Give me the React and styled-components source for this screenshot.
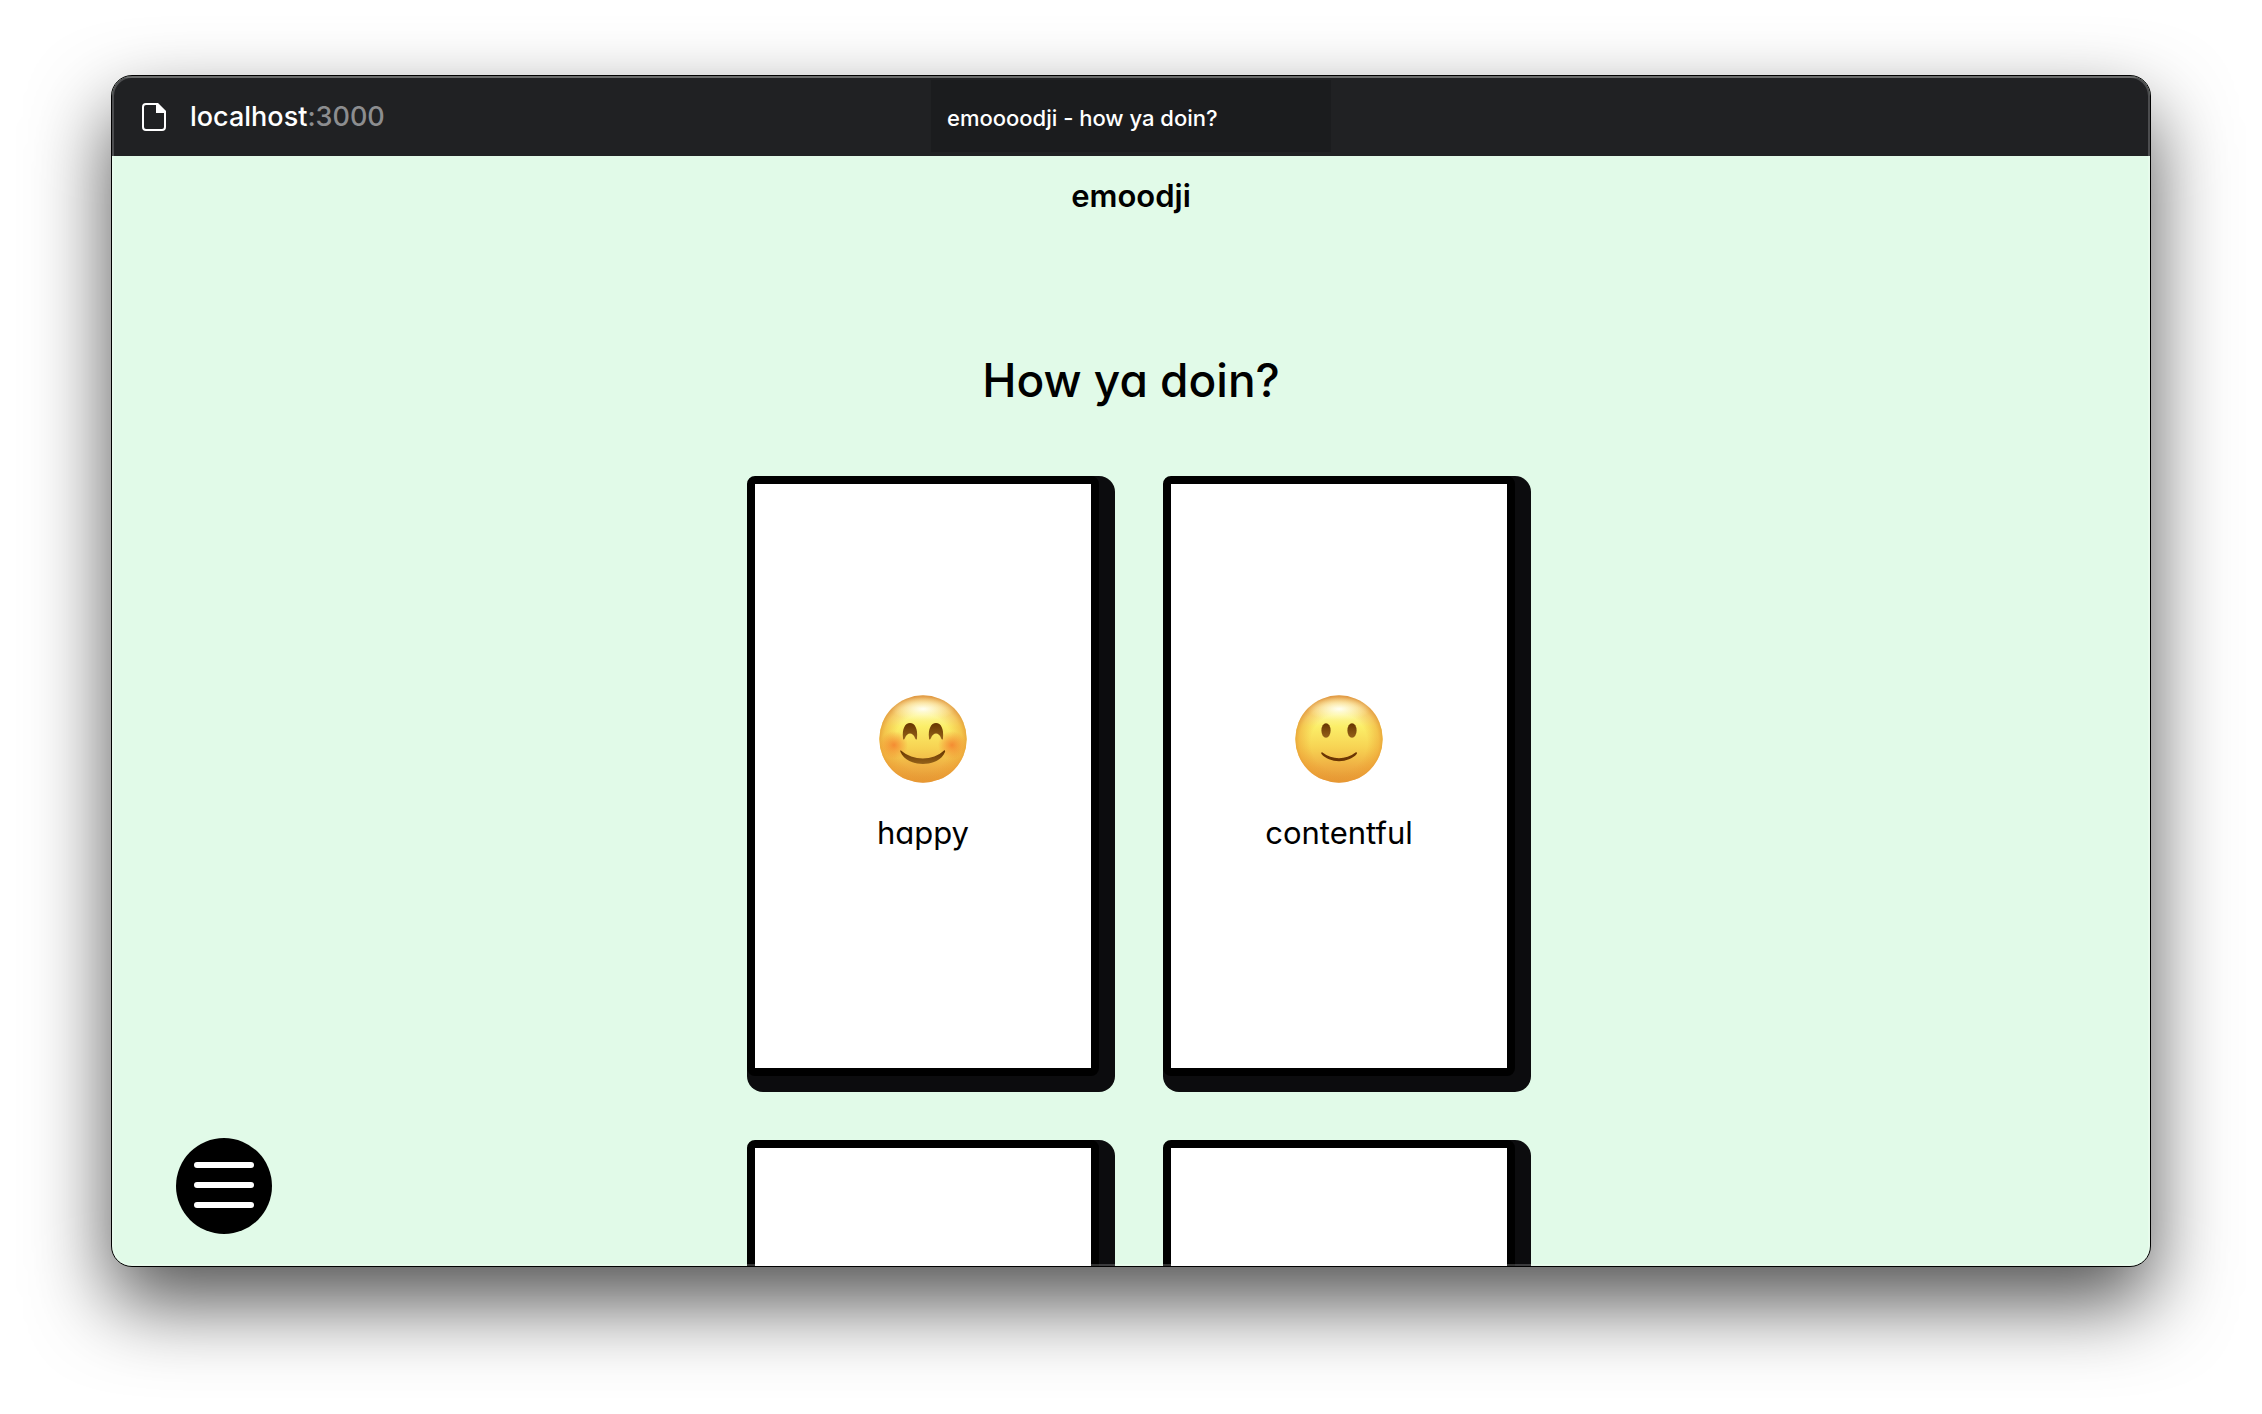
import React, { useId } from "react";
import styled, { createGlobalStyle } from "styled-components";

const GlobalStyle = createGlobalStyle`
  *, *::before, *::after { box-sizing: border-box; }
  body {
    margin: 0;
    background: #fff;
    color: #000;
    font-family: Inter, "Liberation Sans", sans-serif;
  }
`;

const Desktop = styled.div`
  height: 100vh;
  padding: 75px 111px 147px;
  display: flex;
`;

const BrowserWindow = styled.div`
  position: relative;
  flex: 1;
  min-width: 0;
  display: flex;
  flex-direction: column;
  overflow: hidden;
  border: 1px solid #000;
  border-radius: 21px;
  background: #e1fae8;
  box-shadow: 0 36px 80px rgba(0, 0, 0, 0.68);

  &::after {
    content: "";
    position: absolute;
    inset: 0;
    border-radius: 20px;
    box-shadow: inset 0 0 0 2px rgba(255, 255, 255, 0.2);
    pointer-events: none;
  }
`;

const TitleBar = styled.header`
  flex: none;
  display: grid;
  grid-template-columns: 1fr 400px 1fr;
  height: 80px;
  padding: 4px 0;
  background: #202123;
  box-shadow: inset 0 2px 0 #464848;
  color: #fff;
`;

const Address = styled.div`
  display: flex;
  align-items: center;
  gap: 24px;
  padding: 2px 0 0 30px;
  font-size: 27px;
  font-weight: 500;
  line-height: 36px;
`;

const Port = styled.span`
  color: #8c8d8f;
`;

const Tab = styled.div`
  display: flex;
  align-items: center;
  padding: 4px 16px 0;
  background: #1b1c1e;
  font-size: 22px;
  font-weight: 500;
  line-height: 32px;
  white-space: nowrap;
`;

const Page = styled.main`
  position: relative;
  flex: 1;
  min-height: 0;
  overflow: hidden;
  display: flex;
  flex-direction: column;
  align-items: center;
  padding-top: 20px;
`;

const Brand = styled.a`
  color: inherit;
  text-decoration: none;
  font-size: 31px;
  font-weight: 600;
  line-height: 40px;
`;

const Question = styled.h1`
  margin: 136px 0 68px;
  font-size: 46px;
  font-weight: 500;
  line-height: 56px;
  font-feature-settings: "cv11";
`;

const Moods = styled.div`
  display: grid;
  grid-template-columns: repeat(2, 352px);
  grid-auto-rows: 600px;
  gap: 64px;
`;

const MoodCard = styled.button`
  display: flex;
  flex-direction: column;
  align-items: center;
  justify-content: center;
  gap: 30px;
  padding: 0 0 4px;
  border: 8px solid #000;
  border-radius: 8px;
  background: #fff;
  box-shadow: 8px 8px 0 8px #0c0c0e;
  color: #000;
  font-family: inherit;
  font-size: 31px;
  line-height: 40px;
  font-feature-settings: "cv11";
  cursor: pointer;
`;

const MenuButton = styled.button`
  position: absolute;
  left: 64px;
  bottom: 32px;
  display: flex;
  flex-direction: column;
  align-items: center;
  justify-content: center;
  gap: 14px;
  width: 96px;
  height: 96px;
  padding: 0 0 2px;
  border: 0;
  border-radius: 50%;
  background: #000;
  cursor: pointer;
`;

const MenuBar = styled.span`
  width: 60px;
  height: 6px;
  border-radius: 3px;
  background: #fff;
`;

function PageIcon() {
  return (
    <svg width="24" height="28" viewBox="0 0 24 28" aria-hidden="true">
      <path
        d="M4 1h11l8 8v15a3 3 0 0 1-3 3H4a3 3 0 0 1-3-3V4a3 3 0 0 1 3-3z"
        fill="none"
        stroke="#fff"
        strokeWidth="2"
      />
      <path d="M14 0h2l8 8v2H14z" fill="#fff" />
    </svg>
  );
}

function Face({ mood }) {
  const id = useId();
  return (
    <svg width="88" height="88" viewBox="0 0 88 88" aria-hidden="true">
      <defs>
        <linearGradient id={`${id}skin`} x1="0" y1="0" x2="0" y2="1">
          <stop offset="0" stopColor="#fff8cc" />
          <stop offset="0.14" stopColor="#fffab8" />
          <stop offset="0.36" stopColor="#fbee68" />
          <stop offset="0.6" stopColor="#f7d353" />
          <stop offset="0.82" stopColor="#efae42" />
          <stop offset="1" stopColor="#e39534" />
        </linearGradient>
        <radialGradient id={`${id}rim`} cx="0.5" cy="0.54" r="0.54">
          <stop offset="0.6" stopColor="#ec9a30" stopOpacity="0" />
          <stop offset="0.84" stopColor="#ec9a30" stopOpacity="0.45" />
          <stop offset="1" stopColor="#d98428" stopOpacity="0.85" />
        </radialGradient>
        <radialGradient id={`${id}shine`} cx="0.5" cy="0.5" r="0.5">
          <stop offset="0" stopColor="#fffff4" />
          <stop offset="1" stopColor="#fffbb0" stopOpacity="0" />
        </radialGradient>
        <radialGradient id={`${id}blush`}>
          <stop offset="0" stopColor="#f47f2c" stopOpacity="0.85" />
          <stop offset="1" stopColor="#f47f2c" stopOpacity="0" />
        </radialGradient>
        <linearGradient id={`${id}ink`} x1="0" y1="0" x2="0" y2="1">
          <stop offset="0" stopColor="#663500" />
          <stop offset="1" stopColor="#95621a" />
        </linearGradient>
      </defs>
      <circle cx="44" cy="44" r="43.7" fill={`url(#${id}skin)`} />
      <circle cx="44" cy="44" r="43.7" fill={`url(#${id}rim)`} />
      <ellipse cx="44" cy="14" rx="32" ry="12" fill={`url(#${id}shine)`} />
      {mood === "happy" ? (
        <>
          <circle cx="15" cy="50" r="14" fill={`url(#${id}blush)`} />
          <circle cx="73" cy="50" r="14" fill={`url(#${id}blush)`} />
          <path
            d="M24 43C23 34 26 28 31 28S39 34 38 43C38 45 37 45 36 43C34 37 28 37 26 43C25 45 24 45 24 43z"
            fill={`url(#${id}ink)`}
          />
          <path
            d="M50 43C49 34 52 28 57 28S65 34 64 43C64 45 63 45 62 43C60 37 54 37 52 43C51 45 50 45 50 43z"
            fill={`url(#${id}ink)`}
          />
          <path
            d="M22 55.5C34 66 54 66 65 55.5C66 55 66.4 56 66 57C60 73 28 73 21.5 57C21 56 21.4 55 22 55.5z"
            fill={`url(#${id}ink)`}
          />
        </>
      ) : (
        <>
          <ellipse cx="31" cy="35.5" rx="4.6" ry="7.3" fill={`url(#${id}ink)`} />
          <ellipse cx="57" cy="35.5" rx="4.6" ry="7.3" fill={`url(#${id}ink)`} />
          <path
            d="M27.5 57.5C37 65 51 65 60.5 57.5C61.8 56.8 62.5 57.8 61.7 59C54 68.5 34 68.5 26.5 59C25.8 57.8 26.5 56.8 27.5 57.5z"
            fill="#6b3504"
          />
        </>
      )}
    </svg>
  );
}

function Mood({ name, face }) {
  return (
    <MoodCard type="button">
      <Face mood={face} />
      <span>{name}</span>
    </MoodCard>
  );
}

export default function App() {
  return (
    <>
      <GlobalStyle />
      <Desktop>
        <BrowserWindow>
          <TitleBar>
            <Address>
              <PageIcon />
              <span>
                localhost<Port>:3000</Port>
              </span>
            </Address>
            <Tab>emoooodji - how ya doin?</Tab>
          </TitleBar>
          <Page>
            <Brand href="#">emoodji</Brand>
            <Question>How ya doin?</Question>
            <Moods>
              <Mood name="happy" face="happy" />
              <Mood name="contentful" face="content" />
              <MoodCard type="button" aria-label="Third mood" />
              <MoodCard type="button" aria-label="Fourth mood" />
            </Moods>
            <MenuButton type="button" aria-label="Menu">
              <MenuBar />
              <MenuBar />
              <MenuBar />
            </MenuButton>
          </Page>
        </BrowserWindow>
      </Desktop>
    </>
  );
}
